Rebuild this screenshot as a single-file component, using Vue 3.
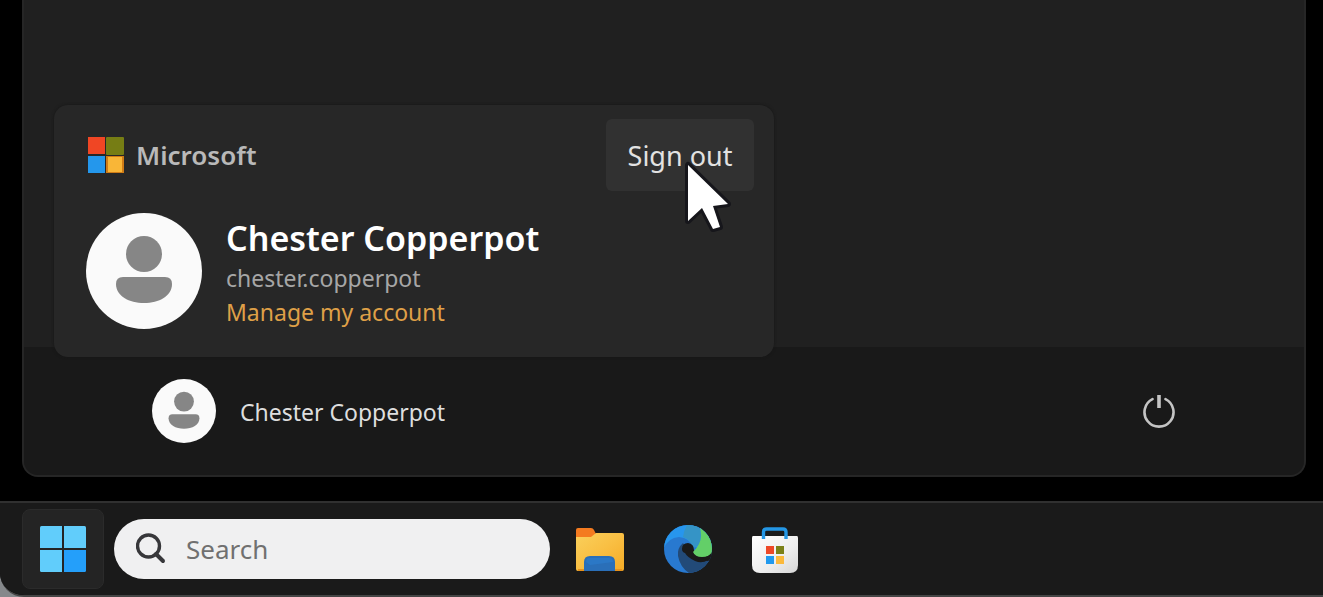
<template>
  <div class="desktop">
    <main class="start-menu">
      <div class="menu-body"></div>

      <footer class="menu-footer">
        <button class="user-btn" type="button" @click="showAccount = !showAccount">
          <svg class="avatar avatar-small" viewBox="0 0 116 116" aria-hidden="true">
            <circle cx="58" cy="58" r="58" fill="#fafafa" />
            <circle cx="58" cy="41" r="18" fill="#868686" />
            <path :d="bodyPath" fill="#868686" />
          </svg>
          <span>{{ user.name }}</span>
        </button>
        <button class="power-btn" type="button" aria-label="Power">
          <svg viewBox="0 0 34 34" fill="none" stroke="#c4c4c4">
            <path d="M10.5 5.2 A14.5 14.5 0 1 0 23.5 5.2" stroke-width="2.6" stroke-linecap="round" />
            <path d="M17 1 V14" stroke-width="3.6" />
          </svg>
        </button>
      </footer>

      <section v-if="showAccount" class="account-card">
        <div class="card-header">
          <svg class="ms-logo" viewBox="0 0 36 36" aria-hidden="true">
            <rect x="0" y="0" width="17" height="17" fill="#f04624" />
            <rect x="18" y="0" width="18" height="18" rx="1" fill="#767d14" />
            <rect x="0" y="19" width="17" height="17" fill="#2497ec" />
            <rect x="18" y="19" width="18" height="17" fill="#d07c16" />
            <rect x="20" y="20" width="14" height="15" fill="#f9b637" />
          </svg>
          <span class="brand">Microsoft</span>
          <button class="sign-out" type="button">
            Sign out
            <svg class="pointer" viewBox="0 0 48 76" aria-hidden="true">
              <path
                d="M4 6 V62 L18 49 L29 70 L36 68 L29 47 L44 45 Z"
                fill="#fff"
                stroke="#16161b"
                stroke-width="6"
                stroke-linejoin="round"
                paint-order="stroke"
              />
            </svg>
          </button>
        </div>
        <div class="card-body">
          <svg class="avatar" viewBox="0 0 116 116" aria-hidden="true">
            <circle cx="58" cy="58" r="58" fill="#fafafa" />
            <circle cx="58" cy="41" r="18" fill="#868686" />
            <path :d="bodyPath" fill="#868686" />
          </svg>
          <div class="user-info">
            <h2>{{ user.name }}</h2>
            <p>{{ user.login }}</p>
            <a href="#">Manage my account</a>
          </div>
        </div>
      </section>
    </main>

    <nav class="taskbar">
      <button class="start-btn" type="button" aria-label="Start" @click="showAccount = false">
        <svg viewBox="0 0 46 46">
          <path d="M1.5 0 H22 V22 H0 V1.5 Q0 0 1.5 0 Z" fill="#61cdfb" />
          <path d="M24 0 H44.5 Q46 0 46 1.5 V22 H24 Z" fill="#61cdfb" />
          <path d="M0 24 H22 V46 H1.5 Q0 46 0 44.5 Z" fill="#61cdfb" />
          <path d="M24 24 H46 V44.5 Q46 46 44.5 46 H24 Z" fill="#249ffa" />
        </svg>
      </button>

      <label class="search">
        <svg viewBox="0 0 30 32" fill="none" stroke="#37373a" aria-hidden="true">
          <circle cx="12.5" cy="13" r="11" stroke-width="3.4" />
          <path d="M20 21 L27 28" stroke-width="4" stroke-linecap="round" />
        </svg>
        <input v-model="query" type="text" placeholder="Search" aria-label="Search" />
      </label>

      <button class="app-btn" type="button" aria-label="File Explorer">
        <svg viewBox="0 0 48 48">
          <defs>
            <linearGradient id="folder" x1="0" y1="0" x2="1" y2="1">
              <stop offset="0" stop-color="#fad05c" />
              <stop offset="0.5" stop-color="#f9bf43" />
              <stop offset="1" stop-color="#f5ab26" />
            </linearGradient>
          </defs>
          <path d="M0 5 Q0 3 2 3 H15 Q17 3 18 5 L20 9 L16 14 H0 Z" fill="#f47b20" />
          <path d="M0 12 H15 L20 8 H46 Q48 8 48 10 V44 Q48 46 46 46 H2 Q0 46 0 44 Z" fill="url(#folder)" />
          <path d="M2 45 H46" stroke="#e8921c" stroke-width="2" />
          <path d="M8 46 V37 Q8 31 14 31 H33 Q39 31 39 37 V46 Z" fill="#2a6fb8" />
          <path d="M10 37 Q10 33 14 33 H33 Q37 33 37 37 L14 40 Z" fill="#2b78c6" />
        </svg>
      </button>

      <button class="app-btn" type="button" aria-label="Microsoft Edge">
        <svg viewBox="0 0 48 48">
          <defs>
            <clipPath id="edge-clip"><circle cx="24" cy="24" r="24" /></clipPath>
          </defs>
          <g clip-path="url(#edge-clip)">
            <rect width="48" height="48" fill="#2879d0" />
            <path d="M0 23 V0 H48 V24 L29 22 Q26 13 15 12 Q4 13 0 23 Z" fill="#2796ee" />
            <path d="M23 0 H38 V19 L29 23 Q27 15 19 12 Q20 5 23 0 Z" fill="#3594c6" />
            <path d="M19 18 Q13 23 14 31 Q16 42 25 48 H48 V30 H26 Z" fill="#224a78" />
            <path
              d="M18 24 Q18 18 24 18 Q30 19 30 25 Q32 32 50 28 V35 L44 35 Q38 39 31 36 Q23 32 21 28 Q18 27 18 24 Z"
              fill="#1a1a1a"
            />
            <path d="M37 2 H50 V24 Q48 32 38 32 Q31 32 29 27 Q37 19 37 11 Q37 7 36 2 Z" fill="#63cf68" />
            <path d="M48 27 Q45 32 38 33 L43 36 L49 35 Z" fill="#1a1a1a" />
          </g>
        </svg>
      </button>

      <button class="app-btn" type="button" aria-label="Microsoft Store">
        <svg viewBox="0 0 48 48">
          <defs>
            <linearGradient id="bag" x1="0" y1="0" x2="1" y2="1">
              <stop offset="0" stop-color="#ffffff" />
              <stop offset="0.6" stop-color="#ededed" />
              <stop offset="1" stop-color="#d6d6d6" />
            </linearGradient>
          </defs>
          <path d="M1 11 H45 Q46 11 46 13 V40 Q46 48 38 48 H8 Q0 48 0 40 V13 Q0 11 1 11 Z" fill="url(#bag)" />
          <path d="M11.5 14 V7 Q11.5 4 14.5 4 H31 Q34 4 34 7 V14" fill="none" stroke="#2497e5" stroke-width="3.4" />
          <rect x="14" y="21" width="8" height="8" fill="#ee4928" />
          <rect x="24" y="21" width="8" height="8" fill="#7b8119" />
          <rect x="14" y="31" width="8" height="8" fill="#2099ee" />
          <rect x="24" y="31" width="8" height="8" fill="#fbb93b" />
        </svg>
      </button>
    </nav>
  </div>
</template>

<script setup>
import { ref } from 'vue'

const user = {
  name: 'Chester Copperpot',
  login: 'chester.copperpot'
}

const bodyPath = 'M37 64 H79 Q86 64 86 71 C86 83 73 90 58 90 C43 90 30 83 30 71 Q30 64 37 64 Z'

const showAccount = ref(true)
const query = ref('')
</script>

<style>
body {
  background: #85888b;
}
</style>

<style scoped>
.desktop {
  display: flex;
  flex-direction: column;
  box-sizing: border-box;
  min-height: 100vh;
  background: #000;
  border-bottom: 2px solid #454545;
  border-bottom-left-radius: 24px;
  font-family: 'Noto Sans', 'Open Sans', sans-serif;
  color: #fff;
  overflow: hidden;
}

button {
  padding: 0;
  border: none;
  background: none;
  color: inherit;
  font-family: inherit;
  cursor: pointer;
}

svg {
  display: block;
  flex-shrink: 0;
}

.start-menu {
  position: relative;
  flex: 1;
  display: flex;
  flex-direction: column;
  margin: 0 17px 24px 22px;
  background: #202020;
  border: 2px solid #262626;
  border-top: none;
  border-radius: 0 0 16px 16px;
}

.menu-body {
  flex: 1;
  min-height: 260px;
}

.menu-footer {
  display: flex;
  align-items: center;
  justify-content: space-between;
  height: 128px;
  padding: 0 128px;
  background: #191919;
  border-radius: 0 0 14px 14px;
}

.user-btn {
  display: flex;
  align-items: center;
  gap: 24px;
  font-size: 23px;
  color: #dedede;
}

.user-btn span {
  padding-top: 2px;
}

.power-btn svg {
  width: 34px;
  height: 34px;
}

.avatar {
  width: 116px;
  height: 116px;
}

.avatar-small {
  width: 64px;
  height: 64px;
}

.account-card {
  position: absolute;
  left: 30px;
  bottom: 118px;
  box-sizing: border-box;
  width: 720px;
  max-width: 95%;
  padding: 14px 20px 28px 32px;
  background: #272727;
  border-radius: 14px;
  box-shadow: 0 0 3px #161616;
}

.card-header {
  display: flex;
  align-items: center;
  gap: 12px;
  margin-bottom: 22px;
}

.ms-logo {
  width: 36px;
  height: 36px;
  margin-left: 2px;
}

.brand {
  flex: 1;
  font-size: 26px;
  font-weight: 600;
  color: #b9b9b9;
}

.sign-out {
  position: relative;
  width: 148px;
  height: 72px;
  background: #313131;
  border-radius: 6px;
  font-size: 27px;
  color: #e2e2e2;
}

.pointer {
  position: absolute;
  left: 78px;
  top: 40px;
  width: 48px;
  height: 76px;
}

.card-body {
  display: flex;
  align-items: center;
  gap: 24px;
}

.user-info {
  padding-top: 2px;
}

.user-info h2 {
  margin: 0;
  font-size: 34px;
  line-height: 46px;
  font-weight: 600;
}

.user-info p {
  margin: 0;
  font-size: 23px;
  line-height: 34px;
  color: #a6a6a6;
}

.user-info a {
  display: block;
  font-size: 23px;
  line-height: 34px;
  color: #dfa047;
  text-decoration: none;
}

.taskbar {
  display: flex;
  align-items: center;
  box-sizing: border-box;
  height: 94px;
  padding-left: 22px;
  background: #1a1a1a;
  border-top: 2px solid #303030;
}

.start-btn {
  display: flex;
  align-items: center;
  justify-content: center;
  width: 82px;
  height: 80px;
  margin-right: 10px;
  background: #242424;
  border: 1px solid #2b2b2b;
  border-radius: 8px;
}

.start-btn svg {
  width: 46px;
  height: 46px;
}

.search {
  display: flex;
  align-items: center;
  gap: 20px;
  box-sizing: border-box;
  width: 436px;
  height: 60px;
  margin-right: 26px;
  padding: 0 22px;
  background: #f0f0f1;
  border-radius: 30px;
}

.search svg {
  width: 30px;
  height: 32px;
}

.search input {
  flex: 1;
  min-width: 0;
  padding: 0;
  border: none;
  outline: none;
  background: none;
  font-family: inherit;
  font-size: 26px;
  color: #333;
}

.search input::placeholder {
  color: #707070;
  opacity: 1;
}

.app-btn {
  margin-right: 40px;
}

.app-btn svg {
  width: 48px;
  height: 48px;
}
</style>
